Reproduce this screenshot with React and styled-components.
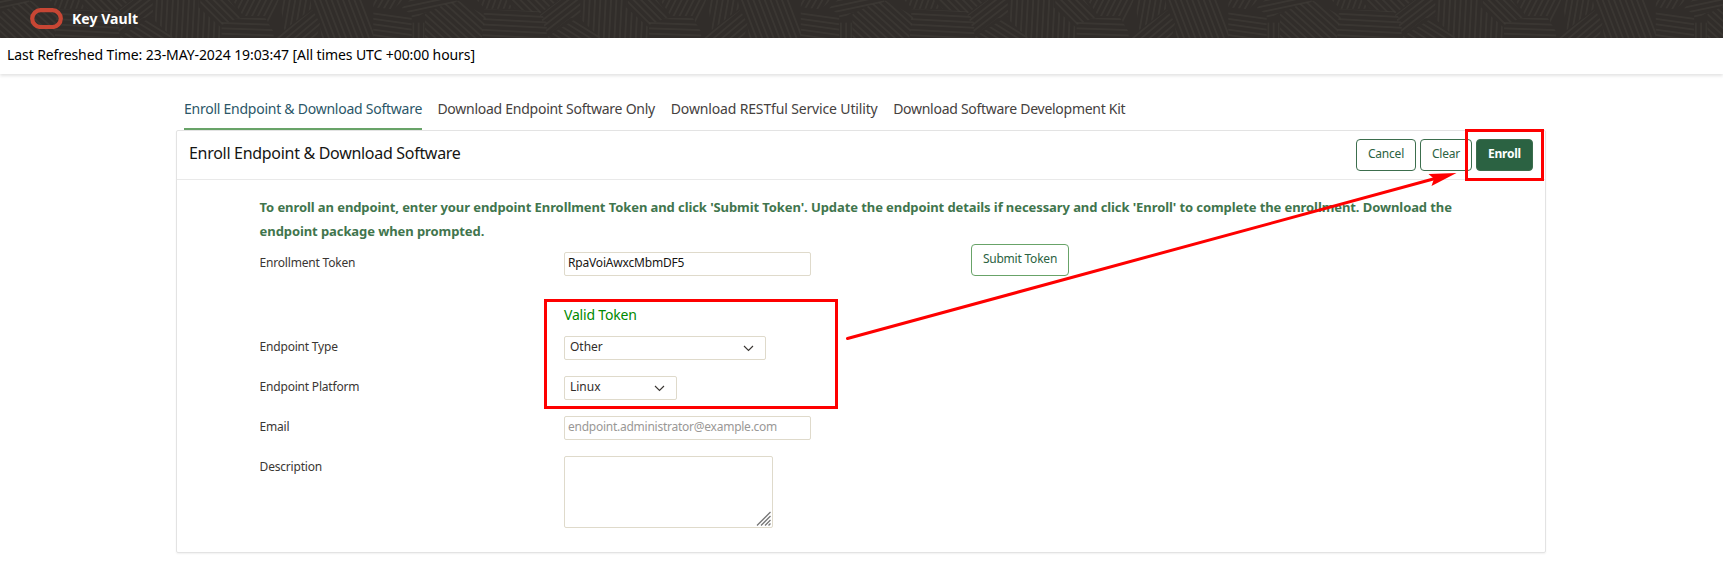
import React from 'react';
import styled, { createGlobalStyle } from 'styled-components';

const GlobalStyle = createGlobalStyle`
  *, *::before, *::after { box-sizing: border-box; }
  body {
    margin: 0;
    background: #fff;
    color: #312d2a;
    font-family: "Noto Sans", "Open Sans", sans-serif;
    font-size: 12px;
    overflow: hidden;
  }
`;

const Page = styled.div`
  position: relative;
  width: 1723px;
  height: 573px;
  display: flex;
  flex-direction: column;
`;

const Header = styled.header`
  display: grid;
  height: 38px;
  background: #312d2a;
  overflow: hidden;
  > * { grid-area: 1 / 1; }
`;

const Brand = styled.div`
  z-index: 1;
  display: flex;
  align-items: center;
  gap: 9px;
  height: 36px;
  padding-left: 30px;
  color: #fff;
  font-size: 14px;
  font-weight: 700;
  letter-spacing: 0.05px;
`;

const StatusBar = styled.div`
  flex: none;
  height: 36px;
  padding-left: 7px;
  line-height: 34px;
  font-size: 14px;
  letter-spacing: -0.09px;
  color: #000;
  box-shadow: 0 2px 3px rgba(0, 0, 0, 0.11);
`;

const Tabs = styled.nav`
  display: flex;
  gap: 15.4px;
  margin: 22px 0 0 184px;
  height: 34px;
`;

const Tab = styled.a`
  width: ${p => p.$width}px;
  line-height: 26px;
  white-space: nowrap;
  font-size: 14px;
  letter-spacing: ${p => p.$spacing}px;
  color: ${p => (p.$active ? '#2b5668' : '#45413e')};
  border-bottom: 2px solid ${p => (p.$active ? '#68a368' : 'transparent')};
`;

const Panel = styled.main`
  width: 1370px;
  height: 423px;
  margin-left: 176px;
  border: 1px solid #e3e3e3;
  border-radius: 2px;
  box-shadow: 0 1px 2px rgba(0, 0, 0, 0.06);
`;

const PanelHeader = styled.div`
  display: flex;
  justify-content: space-between;
  height: 49px;
  padding: 8px 12px 0 12px;
  border-bottom: 1px solid #e9e9e9;
`;

const Title = styled.h1`
  margin: 0;
  font-size: 16px;
  font-weight: 400;
  line-height: 29px;
  letter-spacing: -0.3px;
  color: #161513;
`;

const Actions = styled.div`
  display: flex;
  gap: 4px;
`;

const Button = styled.button`
  width: ${p => p.$width}px;
  height: 32px;
  padding: 0 0 2px;
  border: 1px solid ${p => (p.$light ? '#68a368' : '#3c6e4d')};
  border-radius: 4px;
  background: ${p => (p.$primary ? '#2b6242' : '#fff')};
  color: ${p => (p.$primary ? '#fff' : '#2b6242')};
  font: ${p => (p.$primary ? 700 : 400)} 12px/26px "Noto Sans", sans-serif;
  letter-spacing: -0.22px;
  white-space: nowrap;
`;

const Form = styled.form`
  padding: 15px 0 0 82.6px;
`;

const Instructions = styled.p`
  margin: 0 0 9px;
  font-size: 13px;
  font-weight: 700;
  line-height: 24px;
  letter-spacing: -0.086px;
  white-space: nowrap;
  color: #41754d;
`;

const FormRow = styled.div`
  display: grid;
  grid-template-columns: 304.4px 407px auto;
  align-items: start;
  justify-content: start;
  height: ${p => p.$height || 40}px;
`;

const Label = styled.label`
  line-height: 22px;
  letter-spacing: -0.2px;
  color: #3a3633;
`;

const Input = styled.input`
  width: 247px;
  height: 24px;
  padding: 0 3px 4px;
  border: 1px solid #dfdacb;
  border-radius: 2px;
  background: #fff;
  color: #161513;
  font: 12px "Noto Sans", sans-serif;
  letter-spacing: ${p => p.$spacing || 0}px;
  outline: none;
  &::placeholder { color: #9a9896; opacity: 1; }
`;

const SelectBox = styled.div`
  display: flex;
  align-items: center;
  justify-content: space-between;
  width: ${p => p.$width}px;
  height: 24px;
  padding: 0 11px 0 5px;
  border: 1px solid #dfdacb;
  border-radius: 2px;
  color: #312d2a;
  line-height: 20px;
  > span { padding-bottom: 2px; }
`;

const TextArea = styled.div`
  display: flex;
  align-items: flex-end;
  justify-content: flex-end;
  width: 209px;
  height: 72px;
  padding: 1px;
  border: 1px solid #dfdacb;
  border-radius: 2px;
`;

const SubmitSlot = styled.div`
  margin-top: -8px;
`;

const ValidMessage = styled.div`
  grid-column: 2;
  line-height: 26px;
  font-size: 14px;
  letter-spacing: -0.18px;
  color: #008a00;
`;

const Highlight = styled.div`
  position: absolute;
  left: ${p => p.$x}px;
  top: ${p => p.$y}px;
  width: ${p => p.$w}px;
  height: ${p => p.$h}px;
  border: 3px solid #fe0000;
`;

const ArrowLayer = styled.svg`
  position: absolute;
  left: 0;
  top: 0;
  pointer-events: none;
`;

// Facets of the repeating header texture: outline and hatch angle.
const facets = [
  ['0,30 115,45 115,114 0,114', 8],
  ['0,0 90,0 60,28 0,22', -60],
  ['85,25 110,0 250,0 250,6 150,40 115,62 115,43', -12],
  ['117,68 153,68 153,114 117,114', 90],
  ['155,42 220,10 255,2 338,48 325,114 155,114', 42],
  ['310,0 400,0 420,26 335,26', -70],
  ['405,0 555,0 500,40 425,26', 45],
  ['332,28 500,34 520,68 520,114 327,114', 3],
  ['500,45 560,0 620,0 622,50 590,55 523,105', -38],
  ['520,114 525,108 605,58 680,106 680,114', 32],
  ['624,0 758,0 758,22 823,80 823,114 682,114 624,60', 93],
  ['764,0 850,0 888,50 825,76 762,20', 45],
  ['860,0 998,0 970,80 960,48 892,48', -63],
  ['827,62 890,54 958,54 983,95 983,114 827,114', 2],
  ['1002,0 1093,0 1098,25 1015,90', -80],
  ['987,114 987,107 1015,93 1100,30 1122,70 1112,114', -40],
  ['1100,0 1250,0 1282,90 1282,114 1127,114 1120,60 1105,30', 69],
];

function Texture() {
  return (
    <svg width="1723" height="38" aria-hidden="true">
      <defs>
        {facets.map(([, angle], i) => (
          <pattern key={i} id={`hatch${i}`} width="16" height="16" patternUnits="userSpaceOnUse" patternTransform={`rotate(${angle})`}>
            <path d="M0 8H16" stroke="#3f3b37" strokeWidth="3.3" />
          </pattern>
        ))}
        <g id="tile">
          {facets.map(([points], i) => <polygon key={i} points={points} fill={`url(#hatch${i})`} />)}
        </g>
      </defs>
      {[-1, 0, 1, 2, 3].map(n => (
        <use key={n} href="#tile" transform={`translate(${373.3 + n * 427.5} 0) scale(.33347)`} />
      ))}
    </svg>
  );
}

const Chevron = () => (
  <svg width="11" height="7" viewBox="0 0 11 7" fill="none" stroke="#3a3633" strokeWidth="1.15">
    <path d="M1 1l4.5 4.5L10 1" />
  </svg>
);

export default function App() {
  return (
    <>
      <GlobalStyle />
      <Page>
        <Header>
          <Texture />
          <Brand>
            <svg width="33" height="21" viewBox="0 0 33 21" fill="none">
              <rect x="2.2" y="2.2" width="28.6" height="16.8" rx="8.4" stroke="#c74634" strokeWidth="4.2" />
            </svg>
            Key Vault
          </Brand>
        </Header>
        <StatusBar>Last Refreshed Time: 23-MAY-2024 19:03:47 [All times UTC +00:00 hours]</StatusBar>
        <Tabs>
          <Tab $active $width={238} $spacing={-0.25}>Enroll Endpoint &amp; Download Software</Tab>
          <Tab $width={218} $spacing={-0.26}>Download Endpoint Software Only</Tab>
          <Tab $width={207} $spacing={-0.15}>Download RESTful Service Utility</Tab>
          <Tab $width={232} $spacing={-0.28}>Download Software Development Kit</Tab>
        </Tabs>
        <Panel>
          <PanelHeader>
            <Title>Enroll Endpoint &amp; Download Software</Title>
            <Actions>
              <Button $width={60}>Cancel</Button>
              <Button $width={52}>Clear</Button>
              <Button $width={57} $primary>Enroll</Button>
            </Actions>
          </PanelHeader>
          <Form>
            <Instructions>
              To enroll an endpoint, enter your endpoint Enrollment Token and click 'Submit Token'. Update the endpoint details if necessary and click 'Enroll' to complete the enrollment. Download the
              <br />
              endpoint package when prompted.
            </Instructions>
            <FormRow $height={50}>
              <Label>Enrollment Token</Label>
              <Input defaultValue="RpaVoiAwxcMbmDF5" $spacing={-0.18} />
              <SubmitSlot><Button type="button" $width={98} $light>Submit Token</Button></SubmitSlot>
            </FormRow>
            <FormRow $height={34}>
              <ValidMessage>Valid Token</ValidMessage>
            </FormRow>
            <FormRow>
              <Label>Endpoint Type</Label>
              <SelectBox $width={202}><span>Other</span><Chevron /></SelectBox>
            </FormRow>
            <FormRow>
              <Label>Endpoint Platform</Label>
              <SelectBox $width={113}><span>Linux</span><Chevron /></SelectBox>
            </FormRow>
            <FormRow>
              <Label>Email</Label>
              <Input placeholder="endpoint.administrator@example.com" $spacing={-0.25} />
            </FormRow>
            <FormRow $height={72}>
              <Label>Description</Label>
              <TextArea>
                <svg width="15" height="15" viewBox="0 0 15 15" stroke="#777" strokeWidth="1.3">
                  <path d="M1 14.5L14.5 1M5 14.5L14.5 5M9 14.5L14.5 9M12.5 14.5L14.5 12.5" />
                </svg>
              </TextArea>
            </FormRow>
          </Form>
        </Panel>
        <Highlight $x={544} $y={299} $w={294} $h={110} />
        <Highlight $x={1465} $y={129} $w={79} $h={52} />
        <ArrowLayer width="1723" height="573">
          <path d="M847.5 338.5L1436 178.3" stroke="#fe0000" strokeWidth="3" strokeLinecap="round" />
          <path d="M1456.5 173L1428.5 174L1434 178.7L1431.5 186Z" fill="#fe0000" />
        </ArrowLayer>
      </Page>
    </>
  );
}
